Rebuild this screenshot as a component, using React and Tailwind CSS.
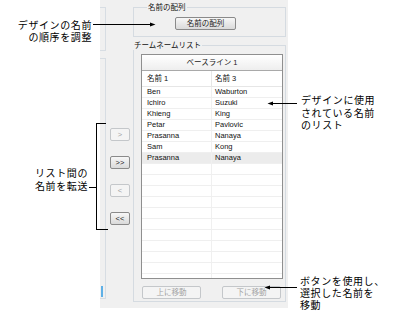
import React from 'react';

const uiFont = "font-['Liberation_Sans','Noto_Sans_CJK_JP',sans-serif]";
const noteFont = "font-['Noto_Sans_CJK_JP','Noto_Sans',sans-serif]";

const rows = [
  ['Ben', 'Waburton'],
  ['Ichiro', 'Suzuki'],
  ['Khieng', 'King'],
  ['Petar', 'Pavlovic'],
  ['Prasanna', 'Nanaya'],
  ['Sam', 'Kong'],
  ['Prasanna', 'Nanaya', true],
  ...Array.from({ length: 11 }, () => ['', '']),
];

const WinButton = ({ children, disabled, className = '' }) => (
  <button
    type="button"
    className={`flex items-center justify-center h-[13px] rounded-[2px] border text-[7.5px] leading-none ${
      disabled
        ? 'border-[#c4c7ca] bg-[#f4f4f4] text-[#a3a3a3]'
        : 'border-[#8a8a8a] bg-gradient-to-b from-[#f7f7f7] to-[#dadada] text-[#222]'
    } ${className}`}
  >
    {children}
  </button>
);

const GroupLabel = ({ children, className = '' }) => (
  <span className={`absolute -top-[5px] px-[1px] bg-[#f0f0f0] text-[7.5px] leading-[9px] text-[#111] ${className}`}>
    {children}
  </span>
);

export default function App() {
  return (
    <div className={`relative w-[394px] h-[323px] bg-white overflow-hidden ${uiFont}`}>
      <div className="flex">
        {/* space for the callouts on the left */}
        <div className="w-[100px] shrink-0" />

        {/* dialog */}
        <div className="w-[188px] h-[308px] bg-[#f0f0f0] flex shrink-0">
          {/* edges of panels cut off on the left */}
          <div className="w-[6px] flex flex-col">
            <div className="mt-[7px] h-[44px] border-r border-y border-[#d7dde3]" />
            <div className="mt-[7px] h-[241px] border-r border-y border-[#d7dde3] flex flex-col justify-end">
              <div className="ml-[1px] mb-[1px] w-[2px] h-[11px] bg-[#5fb0e6]" />
            </div>
          </div>

          {/* transfer buttons */}
          <div className="w-[27px] flex flex-col pl-[4px] pt-[128px] gap-[15px]">
            <WinButton disabled className="w-[20px]">&gt;</WinButton>
            <WinButton className="w-[20px]">&gt;&gt;</WinButton>
            <WinButton disabled className="w-[20px]">&lt;</WinButton>
            <WinButton className="w-[20px]">&lt;&lt;</WinButton>
          </div>

          {/* group boxes */}
          <div className="w-[155px] flex flex-col pr-[2px]">
            <div className="relative mt-[7px] h-[30px] border border-[#d5dbe1]">
              <GroupLabel className="left-[13px]">名前の配列</GroupLabel>
              <WinButton className="mt-[9px] ml-[41px] w-[61px]">名前の配列</WinButton>
            </div>

            <div className="relative mt-[8px] h-[257px] border border-[#d5dbe1]">
              <GroupLabel className="-left-[1px]">チームネームリスト</GroupLabel>

              <div className="mt-[8px] ml-[7px] w-[142px] h-[225px] border border-[#8f8f8f] bg-white overflow-hidden">
                <div className="h-[16px] flex items-center justify-center border-b border-[#a9a9a9] bg-gradient-to-b from-white to-[#eeeeee] text-[7.5px] text-[#222]">
                  ベースライン 1
                </div>
                <div className="h-[16px] flex items-center border-b border-[#e6e6e6] text-[7.5px] text-[#111]">
                  <div className="w-[70px] h-full flex items-center pl-[5px] border-r border-[#e6e6e6]">名前 1</div>
                  <div className="pl-[3px]">名前 3</div>
                </div>
                {rows.map(([first, last, selected], i) => (
                  <div
                    key={i}
                    className={`h-[11px] flex items-center border-b border-[#efefef] text-[7.5px] leading-none text-[#111] ${
                      selected ? 'bg-[#ececec]' : ''
                    }`}
                  >
                    <div className="w-[70px] h-full flex items-center pl-[5px] border-r border-[#f0f0f0]">{first}</div>
                    <div className="pl-[3px]">{last}</div>
                  </div>
                ))}
              </div>

              <div className="mt-[7px] ml-[8px] flex gap-[21px]">
                <WinButton disabled className="w-[59px]">上に移動</WinButton>
                <WinButton disabled className="w-[59px]">下に移動</WinButton>
              </div>
            </div>
          </div>
        </div>
      </div>

      {/* callouts */}
      <div className={`absolute left-0 top-[19px] w-[92px] text-right text-[10px] leading-[12px] tracking-[0.6px] text-black ${noteFont}`}>
        デザインの名前<br />の順序を調整
      </div>
      <div className={`absolute left-0 top-[166px] w-[88px] text-right text-[10px] leading-[13px] tracking-[0.6px] text-black ${noteFont}`}>
        リスト間の<br />名前を転送
      </div>
      <div className={`absolute left-[301px] top-[94px] text-[10px] leading-[12.5px] tracking-[0.6px] text-black ${noteFont}`}>
        デザインに使用<br />されている名前<br />のリスト
      </div>
      <div className={`absolute left-[300px] top-[275px] text-[10px] leading-[12px] tracking-[0.6px] text-black ${noteFont}`}>
        ボタンを使用し、<br />選択した名前を<br />移動
      </div>

      <svg className="absolute inset-0 pointer-events-none" width="394" height="323" viewBox="0 0 394 323">
        <g stroke="#000" strokeWidth="1" fill="none" shapeRendering="crispEdges">
          <path d="M93 24.5 H151" />
          <path d="M272 103.5 H297" />
          <path d="M106 123.5 H96.5 V229.5 H108" />
          <path d="M89 187.5 H96.5" />
          <path d="M269 287.5 H297" />
        </g>
        <g fill="#000">
          <polygon points="150,22.5 155.5,24.5 150,26.5" />
          <polygon points="267.5,103.5 273,101.5 273,105.5" />
          <polygon points="264.5,287.5 270,285.5 270,289.5" />
        </g>
      </svg>
    </div>
  );
}
